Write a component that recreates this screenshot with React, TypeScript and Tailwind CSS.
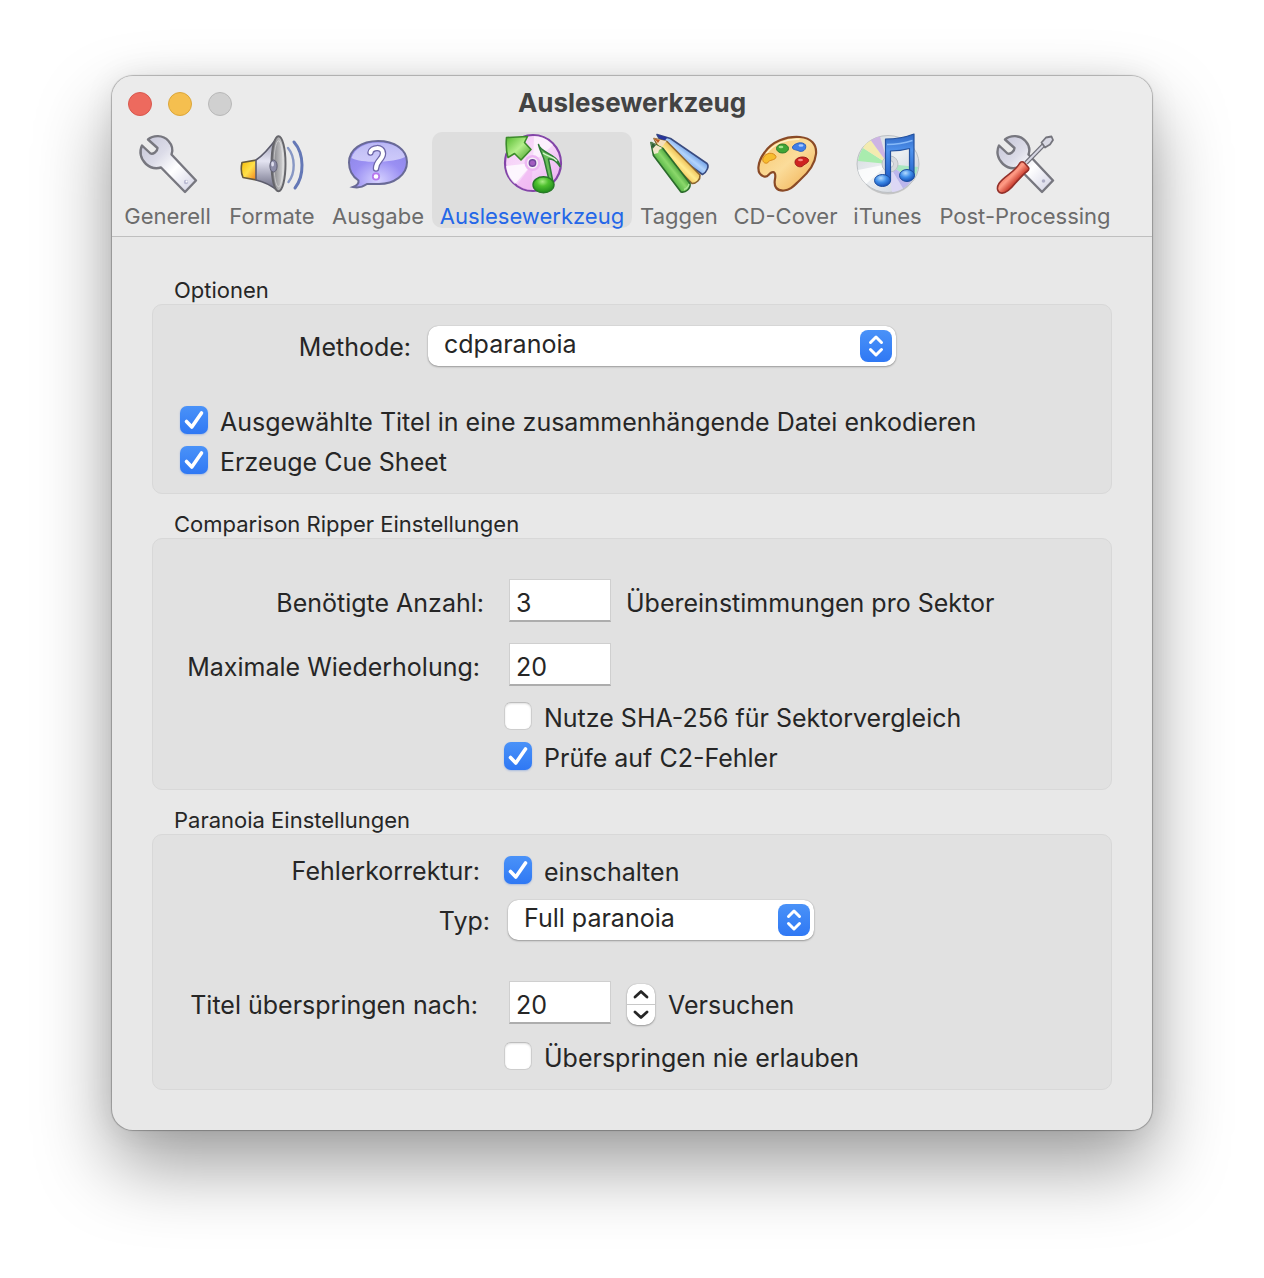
import { useId, useState, type ReactNode } from "react";

const WRENCH =
  "M12 7.5C17 3 27 2.5 32.5 9C36.500 13.500 37 18.500 35.500 22.500L60 48.500L49 60L25 35.500C20 37 14 35.500 10 32C4.500 27 3 19.500 6 13.500L14.500 21.500C17 22.500 21.500 19.500 21.500 16Z";

function WrenchIcon() {
  return (
    <svg viewBox="0 0 64 64" className="size-16 shrink-0" aria-hidden="true">
      <defs>
        <linearGradient id="wrench" x1="0" y1="0" x2="1" y2="1">
          <stop offset="0" stopColor="#c3c3d6" />
          <stop offset=".35" stopColor="#dcdce8" />
          <stop offset=".6" stopColor="#ffffff" />
          <stop offset="1" stopColor="#cfcfe2" />
        </linearGradient>
      </defs>
      <path d={WRENCH} fill="url(#wrench)" stroke="#77777f" strokeWidth="2.4" strokeLinejoin="round" />
      <circle cx="50" cy="50" r="2.2" fill="#b9b9d2" />
      <circle cx="50.600" cy="49.400" r="1" fill="#fff" />
    </svg>
  );
}

function SpeakerIcon() {
  return (
    <svg viewBox="0 0 64 64" className="size-16 shrink-0" aria-hidden="true">
      <defs>
        <linearGradient id="magnet" x1="0" y1="0" x2="1" y2="1">
          <stop offset="0" stopColor="#f5b800" />
          <stop offset=".5" stopColor="#ffe14a" />
          <stop offset="1" stopColor="#f07a1c" />
        </linearGradient>
        <linearGradient id="cone" x1="0" y1="0" x2="0" y2="1">
          <stop offset="0" stopColor="#8f8fa6" />
          <stop offset=".45" stopColor="#e4e4f2" />
          <stop offset="1" stopColor="#62627a" />
        </linearGradient>
        <linearGradient id="mouth" x1="0" y1="0" x2="1" y2="0">
          <stop offset="0" stopColor="#77777c" />
          <stop offset="1" stopColor="#e6e6e6" />
        </linearGradient>
      </defs>
      <path d="M2 30.500L17 28V48L3 45.500C1 41 1 35 2 30.500Z" fill="url(#magnet)" stroke="#665a3c" strokeWidth="1.600" strokeLinejoin="round" />
      <path d="M16 28C24 23 31 14 38 4.500V59C32 54 25 50 16 48Z" fill="url(#cone)" stroke="#5c5c6c" strokeWidth="1.600" strokeLinejoin="round" />
      <ellipse cx="38.500" cy="31.800" rx="7" ry="27.500" fill="url(#mouth)" stroke="#66666b" strokeWidth="2" />
      <ellipse cx="38.500" cy="31.800" rx="4.500" ry="23" fill="none" stroke="#f2f2f2" strokeOpacity=".5" />
      <ellipse cx="33.500" cy="34" rx="3.600" ry="6" fill="#8d8da8" stroke="#5f5f73" />
      <ellipse cx="32.600" cy="32" rx="1.400" ry="2.600" fill="#dedeee" />
      <path d="M48 16C55.500 25 55.500 41 48.500 50" fill="none" stroke="#8797c4" strokeWidth="2.400" strokeLinecap="round" />
      <path d="M54 10C64.500 22 64.500 44 55 56" fill="none" stroke="#6478b6" strokeWidth="3" strokeLinecap="round" />
    </svg>
  );
}

function BubbleIcon() {
  return (
    <svg viewBox="0 0 64 64" className="size-16 shrink-0" aria-hidden="true">
      <defs>
        <radialGradient id="bubble" cx=".5" cy=".85" r=".8">
          <stop offset="0" stopColor="#d6d2ff" />
          <stop offset=".55" stopColor="#9a8ff3" />
          <stop offset="1" stopColor="#8c86e6" />
        </radialGradient>
        <linearGradient id="gloss" x1="0" y1="0" x2="0" y2="1">
          <stop offset="0" stopColor="#b9b6f5" />
          <stop offset="1" stopColor="#e9e8ff" stopOpacity=".65" />
        </linearGradient>
      </defs>
      <path d="M32 9C48.500 9 61 17.500 61 30C61 43 48 52 33 52C28 52 24.500 52 21 52C17.500 54.500 12 56 7 55C11 53.500 13 51.500 12.500 48.500C6.500 44.500 3 38 3 30.500C3 17.500 15.500 9 32 9Z" fill="url(#bubble)" stroke="#696a96" strokeWidth="2" />
      <path d="M32 10.500C46 10.500 57 16.500 59 25C50 30.500 17 32 5.500 26C8.500 16.500 18.500 10.500 32 10.500Z" fill="url(#gloss)" />
      <path d="M24.500 20.500C25 15.500 37 13.500 37 21.500C37 27.500 30 28.500 30 36.500" fill="none" stroke="#6d66a8" strokeWidth="6.500" strokeLinecap="round" />
      <path d="M24.500 20.500C25 15.500 37 13.500 37 21.500C37 27.500 30 28.500 30 36.500" fill="none" stroke="#fff" strokeWidth="4" strokeLinecap="round" />
      <circle cx="30" cy="44.500" r="3.200" fill="#fff" stroke="#b678ee" strokeWidth="1.800" />
    </svg>
  );
}

function RipIcon() {
  return (
    <svg viewBox="0 0 64 64" className="size-16 shrink-0" aria-hidden="true">
      <defs>
        <linearGradient id="ripDisc" x1="0" y1="0" x2="1" y2="1">
          <stop offset="0" stopColor="#f3c4f5" />
          <stop offset=".45" stopColor="#f8dcfa" />
          <stop offset="1" stopColor="#e9a9ef" />
        </linearGradient>
        <linearGradient id="leaf" x1="0" y1="0" x2="1" y2="1">
          <stop offset="0" stopColor="#52b82c" />
          <stop offset=".5" stopColor="#b5ef8c" />
          <stop offset="1" stopColor="#3f9a22" />
        </linearGradient>
        <radialGradient id="noteHead" cx=".45" cy=".3" r=".7">
          <stop offset="0" stopColor="#a8ec84" />
          <stop offset=".4" stopColor="#4fc12f" />
          <stop offset="1" stopColor="#1f8a1c" />
        </radialGradient>
      </defs>
      <circle cx="33" cy="31" r="28" fill="url(#ripDisc)" stroke="#8345a8" strokeWidth="2.200" />
      <path d="M33 31L6 34C7 43 11 49 15 52Z" fill="#fff" opacity=".75" />
      <path d="M33 31L34 4C42 4 49 8 53 13Z" fill="#fff" opacity=".6" />
      <path d="M33 31L17 53C21 56 26 58 31 58Z" fill="#f0b2f2" opacity=".6" />
      <circle cx="32.500" cy="31" r="8" fill="#edb7f3" />
      <circle cx="32.500" cy="31" r="5.500" fill="#f6f0f6" />
      <circle cx="32.500" cy="31" r="3.200" fill="#a35cc0" stroke="#70469a" strokeWidth="1.400" />
      <path d="M6.500 5.500L27.500 4.500L24.500 10.500L31 17.500L21 28L14.500 21.500L8 25.500C6 19 6 11 6.500 5.500Z" fill="url(#leaf)" stroke="#3c8b2b" strokeWidth="1.600" strokeLinejoin="round" />
      <path d="M38.500 12.500C40.500 21.500 58 21.500 60 34.500C56 28.500 51.500 26.500 48.500 27L53.500 53L50 52L44.500 29C43 23 40 19 38.500 12.500Z" fill="#68bd5a" stroke="#2f7a38" strokeWidth="1.500" strokeLinejoin="round" />
      <path d="M43 21C47 24.500 53 24 57 29" fill="none" stroke="#d6f3cf" strokeWidth="1.400" />
      <ellipse cx="43.500" cy="52.800" rx="10.500" ry="8" fill="url(#noteHead)" stroke="#287a28" strokeWidth="1.400" />
    </svg>
  );
}

function PencilsIcon() {
  return (
    <svg viewBox="0 0 64 64" className="size-16 shrink-0" aria-hidden="true">
      <defs>
        <linearGradient id="pencilBlue" x1="0" y1="1" x2="1" y2="0">
          <stop offset=".3" stopColor="#3c78d8" />
          <stop offset=".52" stopColor="#b3d4fb" />
          <stop offset=".7" stopColor="#3f7bd6" />
        </linearGradient>
        <linearGradient id="pencilYellow" x1="0" y1="1" x2="1" y2="0">
          <stop offset=".3" stopColor="#e8a62c" />
          <stop offset=".5" stopColor="#ffeb8f" />
          <stop offset=".7" stopColor="#dc9522" />
        </linearGradient>
        <linearGradient id="pencilGreen" x1="0" y1="1" x2="1" y2="0">
          <stop offset=".3" stopColor="#2f9a2a" />
          <stop offset=".5" stopColor="#8bd86b" />
          <stop offset=".65" stopColor="#2b8a25" />
        </linearGradient>
      </defs>
      <path d="M10 2.500L23.500 6.500L60 31.500C62.500 34 60 40 55.500 42.500L17 15Z" fill="url(#pencilBlue)" stroke="#3a4c80" strokeWidth="1.600" strokeLinejoin="round" />
      <path d="M10 2.500L20.500 5.500L16 11Z" fill="#28359a" />
      <path d="M7 6.500L20 9.500L53 43C53.500 47.500 49.500 51.500 45 51.500L13 19Z" fill="url(#pencilYellow)" stroke="#8b6530" strokeWidth="1.600" strokeLinejoin="round" />
      <path d="M7 6.500L19.500 9L14 16Z" fill="#f4dfbd" />
      <path d="M7 6.500L13 8L11 11Z" fill="#bd5b21" />
      <path d="M4 10.500L16 16.500L43 51.500C43.500 56.500 39 61 34 60L6.500 23.500Z" fill="url(#pencilGreen)" stroke="#2c6b2c" strokeWidth="1.700" strokeLinejoin="round" />
      <path d="M4 10.500L15.500 16L12 18L11 21L7 22Z" fill="#f2e6cb" />
      <path d="M4 10.500L9 13L5.500 17Z" fill="#315f39" />
      <path d="M37 57.500C40 56.500 41.500 54.500 42 52" stroke="#a7e591" strokeWidth="1.500" fill="none" />
    </svg>
  );
}

function PaletteIcon() {
  return (
    <svg viewBox="0 0 64 64" className="size-16 shrink-0" aria-hidden="true">
      <defs>
        <linearGradient id="wood" x1="0" y1="0" x2="1" y2="1">
          <stop offset="0" stopColor="#f7c66c" />
          <stop offset=".5" stopColor="#fbdc9a" />
          <stop offset="1" stopColor="#efab4a" />
        </linearGradient>
      </defs>
      <path d="M10.500 20.500C18 9.500 32 4 46 5C57 6 63 12.500 62 22C61 33 53.500 41.500 45.500 48.500C40 53.500 37 58 30 58.500C22.500 59 19.500 54.500 21 47C22 41.500 20.500 38.500 16.500 41C14 43 13.500 45.500 10 44.500C1.500 42 3.500 30 10.500 20.500Z" fill="url(#wood)" stroke="#8a4a26" strokeWidth="2.200" strokeLinejoin="round" />
      <path d="M12.500 21.500C20 11.500 33 6.500 45.500 7.200" fill="none" stroke="#fff0c9" strokeWidth="1.500" />
      <path d="M9 26C12 20 20 20 22 24.500C22 29 15 27 13.500 31C10 32 8 29 9 26Z" fill="#f7bd2e" stroke="#d98a1e" />
      <ellipse cx="28.500" cy="16.500" rx="6" ry="4.500" fill="#3fa535" stroke="#2c7a2a" />
      <path d="M38.500 15C40 11 49 9 51.500 13C53 18 48 20.500 45 19C42 17.500 38 18 38.500 15Z" fill="#3f7fe8" stroke="#2f62bb" />
      <path d="M41 30C41 25 51 23 54.500 27.500C55.500 31 50 32 48 34.500C45 35.500 41 34 41 30Z" fill="#cf2420" stroke="#9d1d1b" />
      <ellipse cx="27" cy="15" rx="2.400" ry="1.200" fill="#a5e28d" />
      <ellipse cx="47" cy="13.500" rx="2.500" ry="1.200" fill="#a9c9ff" />
      <ellipse cx="46.500" cy="28" rx="2.500" ry="1.200" fill="#f58c82" />
    </svg>
  );
}

function MusicDiscIcon() {
  return (
    <svg viewBox="0 0 64 64" className="size-16 shrink-0" aria-hidden="true">
      <defs>
        <linearGradient id="silver" x1="0" y1="0" x2="1" y2="1">
          <stop offset="0" stopColor="#cfd6da" />
          <stop offset=".5" stopColor="#eceff2" />
          <stop offset="1" stopColor="#c4c9d4" />
        </linearGradient>
        <linearGradient id="noteBlue" x1="0" y1="0" x2="0" y2="1">
          <stop offset="0" stopColor="#2f67c4" />
          <stop offset=".35" stopColor="#4f92ec" />
          <stop offset="1" stopColor="#1d5cc8" />
        </linearGradient>
        <radialGradient id="ball" cx=".4" cy=".3" r=".7">
          <stop offset="0" stopColor="#b4dcff" />
          <stop offset=".5" stopColor="#3f8eea" />
          <stop offset="1" stopColor="#164fb4" />
        </radialGradient>
      </defs>
      <ellipse cx="32" cy="36.500" rx="28" ry="26" fill="#000" opacity=".16" />
      <ellipse cx="32" cy="32" rx="31" ry="28.500" fill="url(#silver)" stroke="#bcc0c4" />
      <path d="M32 32L2 29C3 23 5 19 7 16Z" fill="#a9ecae" />
      <path d="M32 32L7 16C9 12 12 10 15 8.500Z" fill="#f3ebb0" />
      <path d="M32 32L15 8.500C18 6.500 21 5 24 4.500Z" fill="#cdb4e4" />
      <path d="M32 32L10 52C6 48 3 43 2 38Z" fill="#fff" opacity=".8" />
      <path d="M32 32L62 35C61 40 59 45 56 48Z" fill="#a9e6c0" />
      <path d="M32 32L56 48C53 52 50 55 47 56.500Z" fill="#bcb6ec" />
      <path d="M32 32L47 56.500C43 58.500 40 60 36 60Z" fill="#dcd7f5" />
      <circle cx="34" cy="32" r="8" fill="#d7dade" stroke="#bcc1c5" />
      <circle cx="34" cy="32" r="3.500" fill="#f4f5f6" stroke="#b9bdc1" />
      <path d="M29.500 7C40 7 49 5.500 58 2V44H53.500V16.500C48 18 41 19 34.500 19V49H29.500Z" fill="url(#noteBlue)" stroke="#24529f" strokeWidth="1.200" strokeLinejoin="round" />
      <path d="M31 12.500C41 12.500 49 11 56.500 8.500" fill="none" stroke="#86b9f8" strokeWidth="1.500" />
      <ellipse cx="26.500" cy="48.500" rx="8" ry="6" fill="url(#ball)" stroke="#1d4d9e" />
      <ellipse cx="51" cy="43.500" rx="7.500" ry="6" fill="url(#ball)" stroke="#1d4d9e" />
    </svg>
  );
}

function ToolsIcon() {
  return (
    <svg viewBox="0 0 64 64" className="size-16 shrink-0" aria-hidden="true">
      <defs>
        <linearGradient id="grip" x1="0" y1="0" x2="1" y2="1">
          <stop offset=".2" stopColor="#e24a36" />
          <stop offset=".45" stopColor="#ff9c86" />
          <stop offset=".65" stopColor="#c02a1d" />
        </linearGradient>
      </defs>
      <path d={WRENCH} fill="url(#wrench)" stroke="#77777f" strokeWidth="2.400" strokeLinejoin="round" />
      <circle cx="50.500" cy="49" r="1.800" fill="#aeaec6" />
      <path d="M33 31L51 12.500" stroke="#6f6f78" strokeWidth="4.600" />
      <path d="M33 31L51 12.500" stroke="#d6d6e2" strokeWidth="2" />
      <path d="M48.500 10.500L53 5.500L58.500 4.500L60 8L57 12.500L52 15.500Z" fill="#d9d9e4" stroke="#74747c" strokeWidth="1.800" strokeLinejoin="round" />
      <path d="M26.500 31.500C28 29 30 29.500 31.500 31L35.500 35.500C36.500 37.500 35.500 38.500 34 39.500C31 41.500 27 46 22.500 51C18.500 56 13 62 8 61C4 60 3.500 55.500 6 51.500C11 44 22 40 26.500 31.500Z" fill="url(#grip)" stroke="#93302a" strokeWidth="1.600" strokeLinejoin="round" />
    </svg>
  );
}

const TABS: { name: string; width: string; icon: ReactNode }[] = [
  { name: "Generell", width: "w-[105px]", icon: <WrenchIcon /> },
  { name: "Formate", width: "w-[104px]", icon: <SpeakerIcon /> },
  { name: "Ausgabe", width: "w-[108px]", icon: <BubbleIcon /> },
  { name: "Auslesewerkzeug", width: "w-[200px]", icon: <RipIcon /> },
  { name: "Taggen", width: "w-[94px]", icon: <PencilsIcon /> },
  { name: "CD-Cover", width: "w-[119px]", icon: <PaletteIcon /> },
  { name: "iTunes", width: "w-[85px]", icon: <MusicDiscIcon /> },
  { name: "Post-Processing", width: "w-[190px]", icon: <ToolsIcon /> },
];

function Checkbox({ label, checked = false }: { label: string; checked?: boolean }) {
  const id = useId();
  return (
    <div className="flex items-center gap-3">
      <span className="grid size-7 shrink-0">
        <input
          id={id}
          type="checkbox"
          defaultChecked={checked}
          className="peer col-start-1 row-start-1 size-7 appearance-none rounded-[7px] border border-[#cdcdcd] border-t-[#bdbdbd] bg-white shadow-[inset_0_1px_2px_rgba(0,0,0,0.12)] checked:border-0 checked:bg-linear-to-b checked:from-[#4a92f8] checked:to-[#2f78f4] checked:shadow-[0_1px_2px_rgba(0,80,220,0.25)]"
        />
        <svg viewBox="0 0 28 28" className="pointer-events-none invisible col-start-1 row-start-1 size-7 peer-checked:visible" aria-hidden="true">
          <path d="M6.500 15.500L11.800 21L21.500 7" fill="none" stroke="#fff" strokeWidth="3.600" strokeLinecap="round" strokeLinejoin="round" />
        </svg>
      </span>
      <label htmlFor={id} className="pt-1">{label}</label>
    </div>
  );
}

function Popup({ id, options, width }: { id: string; options: string[]; width: string }) {
  return (
    <span className={`grid items-center ${width}`}>
      <select
        id={id}
        className="col-start-1 row-start-1 h-10 w-full appearance-none rounded-[10px] bg-white pr-12 pb-1 pl-4 shadow-[0_0_1px_rgba(0,0,0,0.3),0_1px_2px_rgba(0,0,0,0.3)]"
      >
        {options.map((o) => (
          <option key={o}>{o}</option>
        ))}
      </select>
      <span className="pointer-events-none col-start-1 row-start-1 mr-1 flex h-8 w-8 items-center justify-center justify-self-end rounded-lg bg-linear-to-b from-[#4a92f8] to-[#2f78f4]">
        <svg viewBox="0 0 32 32" className="size-8" aria-hidden="true">
          <path d="M10.500 12.500L16 7L21.500 12.500M10.500 19.500L16 25L21.500 19.500" fill="none" stroke="#fff" strokeWidth="3" strokeLinecap="round" strokeLinejoin="round" />
        </svg>
      </span>
    </span>
  );
}

const FIELD =
  "ml-[5px] h-[43px] w-[102px] border border-[#cfcfcf] border-b-2 border-b-[#adadad] bg-white pt-[6px] pl-[6px]";

function Group({ title, className, children }: { title: string; className: string; children: ReactNode }) {
  const id = useId();
  return (
    <section aria-labelledby={id}>
      <h2 id={id} className="mt-4 pl-[22px] text-[22px] leading-7">{title}</h2>
      <div className={`rounded-[10px] border border-[#d8d8d8] bg-[#e1e1e1] ${className}`}>{children}</div>
    </section>
  );
}

export default function App() {
  const [active, setActive] = useState("Auslesewerkzeug");
  const [tries, setTries] = useState(20);
  return (
    <main className="min-h-screen bg-white px-28 pt-[76px] pb-[148px] font-['Inter',sans-serif] text-[25px] leading-8 text-[#262626]">
      <div className="overflow-hidden rounded-[21px] bg-[#e8e8e8] shadow-[0_0_1px_1px_rgba(0,0,0,0.26),0_36px_76px_rgba(0,0,0,0.38),0_0_30px_rgba(0,0,0,0.08)]">
        <header className="border-b border-[#bfbfbf] bg-[#ebebeb] pb-2">
          <div className="grid h-14 grid-cols-[1fr_auto_1fr] items-center px-4">
            <div className="flex gap-4">
              <button aria-label="Schließen" className="size-6 rounded-full border border-[#d8584e] bg-[#ed6a5e]" />
              <button aria-label="Minimieren" className="size-6 rounded-full border border-[#dba63a] bg-[#f5bf4f]" />
              <button aria-label="Zoomen" disabled className="size-6 rounded-full border border-[#b8b8b8] bg-[#d0d0d0]" />
            </div>
            <h1 className="pb-[2px] text-[26px] font-bold text-[#434343]">Auslesewerkzeug</h1>
          </div>
          <nav className="flex pl-[3px]">
            {TABS.map((t) => (
              <button
                key={t.name}
                onClick={() => setActive(t.name)}
                aria-pressed={active === t.name}
                className={`flex h-24 shrink-0 flex-col items-center rounded-[10px] text-[22px] leading-10 whitespace-nowrap ${t.width} ${
                  active === t.name ? "bg-[#dedede] text-[#2467e8]" : "text-[#6c6c6c]"
                }`}
              >
                {t.icon}
                {t.name}
              </button>
            ))}
          </nav>
        </header>

        <form className="px-10 pt-[23px] pb-10">
          <Group title="Optionen" className="flex flex-col px-[27px] pt-[21px] pb-[15px]">
            <div className="mb-[36px] flex items-center">
              <label htmlFor="method" className="w-[248px] pt-[2px] pr-[17px] text-right">Methode:</label>
              <Popup id="method" options={["cdparanoia", "Comparison Ripper", "Basic Ripper"]} width="w-[468px]" />
            </div>
            <div className="flex flex-col gap-1">
              <Checkbox label="Ausgewählte Titel in eine zusammenhängende Datei enkodieren" checked />
              <Checkbox label="Erzeuge Cue Sheet" checked />
            </div>
          </Group>

          <Group title="Comparison Ripper Einstellungen" className="flex flex-col pt-10 pb-[15px]">
            <div className="mb-[21px] flex items-center">
              <label htmlFor="matches" className="w-[351px] pt-1 pr-5 text-right">Benötigte Anzahl:</label>
              <input id="matches" defaultValue="3" className={FIELD} />
              <span className="pt-1 pl-[15px]">Übereinstimmungen pro Sektor</span>
            </div>
            <div className="mb-[12px] flex items-center">
              <label htmlFor="retries" className="w-[351px] pt-1 pr-6 text-right">Maximale Wiederholung:</label>
              <input id="retries" defaultValue="20" className={FIELD} />
            </div>
            <div className="flex flex-col gap-1 pl-[351px]">
              <Checkbox label="Nutze SHA-256 für Sektorvergleich" />
              <Checkbox label="Prüfe auf C2-Fehler" checked />
            </div>
          </Group>

          <Group title="Paranoia Einstellungen" className="flex flex-col pt-[17px] pb-[15px]">
            <div className="mb-[12px] flex items-center">
              <span className="w-[351px] pt-[2px] pr-6 text-right">Fehlerkorrektur:</span>
              <Checkbox label="einschalten" checked />
            </div>
            <div className="mb-[40px] flex items-center">
              <label htmlFor="level" className="w-[355px] pt-[2px] pr-[18px] text-right">Typ:</label>
              <Popup id="level" options={["Full paranoia", "Overlap checking"]} width="w-[306px]" />
            </div>
            <div className="mb-[13px] flex items-center">
              <label htmlFor="skip" className="w-[351px] pt-1 pr-[26px] text-right">Titel überspringen nach:</label>
              <input id="skip" value={tries} onChange={(e) => setTries(Number(e.target.value) || 0)} className={FIELD} />
              <span className="mt-1 ml-4 flex h-[41px] w-7 flex-col divide-y divide-[#c8c8c8] rounded-[10px] bg-white shadow-[0_0_1px_rgba(0,0,0,0.3),0_1px_2px_rgba(0,0,0,0.3)]">
                <button type="button" aria-label="Mehr" onClick={() => setTries(tries + 1)} className="flex flex-1 items-center justify-center">
                  <svg viewBox="0 0 16 10" className="h-[10px] w-4" aria-hidden="true">
                    <path d="M2 8L8 2.500L14 8" fill="none" stroke="#262626" strokeWidth="2.800" strokeLinecap="round" strokeLinejoin="round" />
                  </svg>
                </button>
                <button type="button" aria-label="Weniger" onClick={() => setTries(Math.max(0, tries - 1))} className="flex flex-1 items-center justify-center">
                  <svg viewBox="0 0 16 10" className="h-[10px] w-4" aria-hidden="true">
                    <path d="M2 2L8 7.500L14 2" fill="none" stroke="#262626" strokeWidth="2.800" strokeLinecap="round" strokeLinejoin="round" />
                  </svg>
                </button>
              </span>
              <span className="pt-1 pl-[13px]">Versuchen</span>
            </div>
            <div className="pl-[351px]">
              <Checkbox label="Überspringen nie erlauben" />
            </div>
          </Group>
        </form>
      </div>
    </main>
  );
}
